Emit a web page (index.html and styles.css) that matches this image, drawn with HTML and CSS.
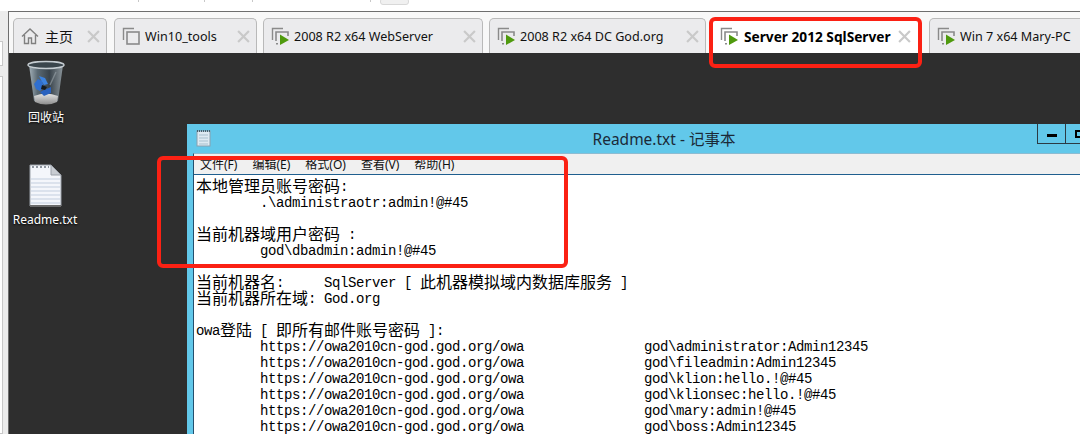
FILE: index.html
```html
<!DOCTYPE html>
<html lang="zh-CN">
<head>
  <meta charset="UTF-8" />
  <title>Server 2012 SqlServer</title>
  <link rel="stylesheet" href="styles.css">
</head>
<body>
  <svg width="0" height="0" class="defs">
    <symbol id="vm-off" viewBox="0 0 18 18">
      <path d="M12 1.5H1.5V13" fill="none" stroke="#8a8a8a" stroke-width="1.4"/>
      <rect x="5" y="5" width="12" height="12" fill="none" stroke="#8a8a8a" stroke-width="1.6"/>
    </symbol>
    <symbol id="vm-on" viewBox="0 0 18 18">
      <path d="M12 1.5H1.5V13" fill="none" stroke="#8a8a8a" stroke-width="1.4"/>
      <path d="M5 14V5H17V9M5 16.8H7" fill="none" stroke="#8a8a8a" stroke-width="1.6"/>
      <path d="M9 7.5L18 13L9 18Z" fill="#4f9a0e"/>
    </symbol>
    <symbol id="tab-x" viewBox="0 0 12 12">
      <path d="M1 1L11 11M11 1L1 11" stroke="#c9c9c9" stroke-width="2"/>
    </symbol>
  </svg>

  <div class="top-strip">
    <span class="tick tick-a"></span>
    <span class="tick tick-b"></span>
    <span class="tick tick-c"></span>
    <span class="tick tick-d"></span>
    <span class="top-btn"></span>
  </div>

  <div class="shell">
    <div class="side">
      <div class="side-box"></div>
      <div class="side-box side-box-low"></div>
    </div>
    <div class="main">
      <div class="tabs">
        <div class="tab tab-home">
          <svg class="tab-icon" viewBox="0 0 18 18"><path d="M1 9.5L9 2L17 9.5M3.5 8V16.5H7.5V11H10.5V16.5H14.5V8" fill="none" stroke="#808080" stroke-width="1.4"/></svg>
          <span class="tab-label tab-label-cn">主页</span>
          <svg class="tab-close"><use href="#tab-x"/></svg>
        </div>
        <div class="tab tab-tools">
          <svg class="tab-icon"><use href="#vm-off"/></svg>
          <span class="tab-label">Win10_tools</span>
          <svg class="tab-close"><use href="#tab-x"/></svg>
        </div>
        <div class="tab tab-web">
          <svg class="tab-icon"><use href="#vm-on"/></svg>
          <span class="tab-label">2008 R2 x64 WebServer</span>
          <svg class="tab-close"><use href="#tab-x"/></svg>
        </div>
        <div class="tab tab-dc">
          <svg class="tab-icon"><use href="#vm-on"/></svg>
          <span class="tab-label">2008 R2 x64 DC God.org</span>
          <svg class="tab-close"><use href="#tab-x"/></svg>
        </div>
        <div class="tab tab-active">
          <svg class="tab-icon"><use href="#vm-on"/></svg>
          <span class="tab-label">Server 2012 SqlServer</span>
          <svg class="tab-close"><use href="#tab-x"/></svg>
        </div>
        <div class="tab tab-mary">
          <svg class="tab-icon"><use href="#vm-on"/></svg>
          <span class="tab-label">Win 7 x64 Mary-PC</span>
        </div>
      </div>
      <div class="desktop">
        <div class="desk-icon desk-bin">
          <svg width="38" height="47" viewBox="0 0 38 47">
            <defs>
              <linearGradient id="bin-body" x1="0" x2="1" y1="0" y2="0">
                <stop offset="0" stop-color="#a3b0b8"/>
                <stop offset="0.25" stop-color="#5b6a74"/>
                <stop offset="0.6" stop-color="#39434b"/>
                <stop offset="1" stop-color="#8b959b"/>
              </linearGradient>
              <linearGradient id="bin-foot" x1="0" x2="0" y1="0" y2="1">
                <stop offset="0" stop-color="#e4e4e4"/>
                <stop offset="1" stop-color="#8d8d8d"/>
              </linearGradient>
            </defs>
            <path d="M2 5L7 41Q19 47 31 41L36 5Z" fill="url(#bin-body)"/>
            <path d="M7 36Q19 31 31 36L30 42Q19 47 8 42Z" fill="url(#bin-foot)"/>
            <ellipse cx="19" cy="5" rx="18" ry="3.5" fill="#3a454c" stroke="#c6cdd2" stroke-width="1.4"/>
            <path d="M7 24L11 19L15 21L17 27L13 31L9 29Z" fill="#2f6fd0"/>
            <path d="M12 16L18 18L21 24L17 25L14 20Z" fill="#3c82e0"/>
            <path d="M17 30L24 27L24 33L17 36L13 32Z" fill="#2a62bf"/>
            <path d="M15 25L20 27L18 30L14 29Z" fill="#161b1f"/>
            <path d="M29 12L23 25" stroke="#9aa4aa" stroke-width="1.4" opacity="0.6"/>
          </svg>
          <span class="desk-label">回收站</span>
        </div>
        <div class="desk-icon desk-file">
          <svg width="33" height="43" viewBox="0 0 33 43">
            <path d="M1 1H22L32 11V42H1Z" fill="#f4f6fb" stroke="#9aa0a8"/>
            <path d="M22 1V11H32Z" fill="#c8ccd2" stroke="#9aa0a8"/>
            <path d="M3 3H20" stroke="#8f96a0" stroke-width="2" stroke-dasharray="2 2"/>
            <path d="M2 15H31M2 19H31M2 23H31M2 27H31M2 31H31M2 35H31M2 39H31" stroke="#c3cede"/>
            <path d="M1 42H32" stroke="#6a6a6a" stroke-width="2"/>
          </svg>
          <span class="desk-label">Readme.txt</span>
        </div>

        <div class="window">
          <div class="title-bar">
            <svg class="note-icon" width="15" height="17" viewBox="0 0 15 17">
              <rect x="1" y="1" width="13" height="15" fill="#dfeaf2" stroke="#8aa0ae"/>
              <path d="M3 5H12M3 8H12M3 11H12M3 14H12" stroke="#a9c1cf"/>
              <path d="M1 1H14" stroke="#47606e" stroke-width="2" stroke-dasharray="1 1"/>
            </svg>
            <span class="title-text">Readme.txt - 记事本</span>
            <div class="win-btns">
              <div class="win-btn win-min"><span class="min-glyph"></span></div>
              <div class="win-btn win-max"><span class="max-glyph"></span></div>
              <div class="win-btn win-close"></div>
            </div>
          </div>
          <div class="client">
            <div class="menu">
              <span>文件(F)</span>
              <span>编辑(E)</span>
              <span>格式(O)</span>
              <span>查看(V)</span>
              <span>帮助(H)</span>
            </div>
            <div class="note">
              <div class="ln"><span class="cn">本地管理员账号密码</span>:</div>
              <div class="ln">        .\administraotr:admin!@#45</div>
              <div class="ln"></div>
              <div class="ln"><span class="cn">当前机器域用户密码</span> :</div>
              <div class="ln">        god\dbadmin:admin!@#45</div>
              <div class="ln"></div>
              <div class="ln"><span class="cn">当前机器名</span>:     SqlServer [ <span class="cn">此机器模拟域内数据库服务</span> ]</div>
              <div class="ln"><span class="cn">当前机器所在域</span>: God.org</div>
              <div class="ln"></div>
              <div class="ln">owa<span class="cn">登陆</span> [ <span class="cn">即所有邮件账号密码</span> ]:</div>
              <div class="ln">        https://owa2010cn-god.god.org/owa               god\administrator:Admin12345</div>
              <div class="ln">        https://owa2010cn-god.god.org/owa               god\fileadmin:Admin12345</div>
              <div class="ln">        https://owa2010cn-god.god.org/owa               god\klion:hello.!@#45</div>
              <div class="ln">        https://owa2010cn-god.god.org/owa               god\klionsec:hello.!@#45</div>
              <div class="ln">        https://owa2010cn-god.god.org/owa               god\mary:admin!@#45</div>
              <div class="ln">        https://owa2010cn-god.god.org/owa               god\boss:Admin12345</div>
            </div>
          </div>
        </div>
      </div>
    </div>
  </div>

  <div class="mark mark-tab"></div>
  <div class="mark mark-note"></div>
</body>
</html>
```

FILE: styles.css
```css
* { box-sizing: border-box; }
html, body { margin: 0; padding: 0; }
body {
  position: relative;
  width: 1080px; height: 434px;
  overflow: hidden;
  background: #fff;
  font-family: "Noto Sans", "Noto Sans CJK SC", sans-serif;
}
.defs { position: absolute; }

/* strip of the outer app above the tabs */
.top-strip { position: relative; height: 11px; background: #fff; }
.tick { position: absolute; top: 0; width: 1px; height: 2px; background: #c8c8c8; }
.tick-a { left: 138px; }
.tick-b { left: 204px; }
.tick-c { left: 252px; }
.tick-d { left: 370px; }
.top-btn {
  position: absolute; left: 380px; top: -2px;
  width: 29px; height: 7px;
  background: #f0f0f0; border: 1px solid #d8d8d8; border-radius: 3px;
}

.shell { display: flex; height: 423px; }
.side {
  width: 8px; flex: none;
  background: #ececec;
  padding-top: 30px;
  display: flex; flex-direction: column; gap: 10px;
}
.side-box { width: 3px; height: 25px; background: #fff; border: 1px solid #c8c8c8; border-left: none; }
.side-box-low { flex: 1; }

.main {
  flex: 1; min-width: 0;
  border-top: 1px solid #6e6e6e;
  border-left: 1px solid #6e6e6e;
  display: flex; flex-direction: column;
}

/* tabs */
.tabs {
  height: 41px; flex: none;
  background: #f8f8f8;
  padding: 6px 0 0 4px;
  display: flex; align-items: flex-end;
}
.tab {
  height: 35px; flex: none;
  display: flex; align-items: center;
  padding: 0 6px 0 7px;
  margin-right: 6px;
  background: #ebebed;
  border: 1px solid #b9b9b9; border-bottom: none;
  border-radius: 5px 5px 0 0;
  font-size: 12.6px; color: #111;
}
.tab-home { width: 94px; padding-left: 7px; margin-right: 7px; }
.tab-tools { width: 143px; }
.tab-web { width: 220px; }
.tab-dc { width: 217px; }
.tab-active {
  width: 206px; margin-right: 11px;
  background: #fff; border-color: #fff;
  font-size: 13.7px; font-weight: 700; color: #000;
}
.tab-mary { width: 160px; margin-right: 0; }
.tab-icon { width: 18px; height: 18px; flex: none; }
.tab-label { margin-left: 5px; white-space: nowrap; }
.tab-active .tab-label { margin-left: 6px; }
.tab-label-cn { font-size: 14px; margin-left: 6px; }
.tab-close { width: 13px; height: 13px; flex: none; margin-left: auto; }

/* desktop */
.desktop { position: relative; flex: 1; background: #2e2e2e; overflow: hidden; }
.desk-icon {
  position: absolute; width: 80px;
  display: flex; flex-direction: column; align-items: center;
}
.desk-bin { left: -3px; top: 7px; gap: 2px; }
.desk-file { left: -4px; top: 111px; gap: 4px; }
.desk-label {
  font-size: 12px; line-height: 17px; color: #fff;
  text-shadow: 0 1px 2px #000;
}

/* notepad window */
.window {
  position: absolute; left: 178px; top: 71px;
  width: 954px; height: 340px;
  background: #62c8ea;
  padding: 0 6px;
  display: flex; flex-direction: column;
}
.title-bar {
  position: relative;
  height: 29px; flex: none;
  display: flex; align-items: center; justify-content: center;
}
.note-icon { position: absolute; left: 3px; top: 6px; }
.title-text { font-size: 15.5px; line-height: 28px; color: #1b2a38; }
.win-btns {
  position: absolute; right: -6px; top: 0;
  display: flex; height: 20px;
  border: 1px solid #2b3a44; border-top: none;
}
.win-btn { display: flex; align-items: center; justify-content: center; }
.win-min { width: 28px; border-right: 1px solid #2b3a44; }
.win-max { width: 29px; border-right: 1px solid #2b3a44; }
.win-close { width: 45px; background: #62c8ea; }
.min-glyph { width: 10px; height: 3px; background: #000; margin-top: 3px; }
.max-glyph { width: 10px; height: 8px; border: 2px solid #000; }

.client {
  flex: 1; min-height: 0;
  border-left: 1px solid #24506e;
  border-top: 1px solid #8dbcd2;
  background: #fff;
}
.menu {
  height: 21px;
  background: #f0f0f0;
  border-bottom: 1px solid #1f5f8f;
  padding: 0 0 1px 6px;
  display: flex; align-items: center; gap: 15px;
  font-size: 12px; color: #111;
}
.note {
  padding: 4px 0 0 2px;
  font-family: "Liberation Mono", "Noto Sans CJK SC", monospace;
  font-size: 14px;
  letter-spacing: -0.4px;
  color: #000;
}
.ln { height: 16px; line-height: 16px; white-space: pre; }
.cn {
  display: inline-block;
  vertical-align: top;
  height: 16px;
  font-family: "Noto Sans CJK SC", sans-serif;
  font-size: 16px; line-height: 13px;
  letter-spacing: 0;
}

/* red annotation boxes drawn over the shot */
.mark { position: absolute; border: 4px solid #fb2114; border-radius: 6px; }
.mark-tab { left: 709px; top: 17px; width: 213px; height: 51px; }
.mark-note { left: 157px; top: 156px; width: 411px; height: 112px; }
```
